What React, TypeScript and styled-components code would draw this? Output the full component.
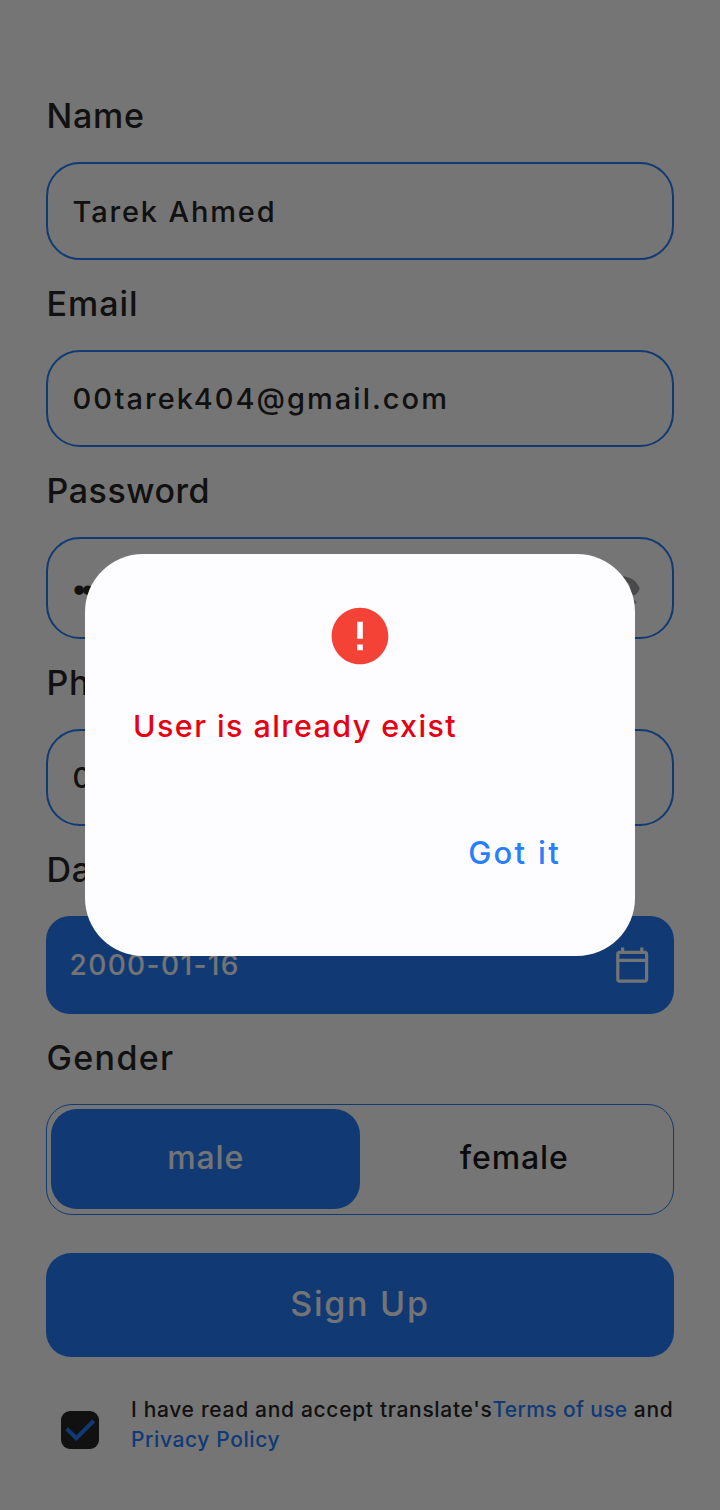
import React from 'react';
import styled, { createGlobalStyle } from 'styled-components';
import { MdError, MdOutlineCalendarToday, MdVisibilityOff } from 'react-icons/md';

const blue = '#267fff';
const ink = '#262626';
const paper = '#fdfdff';

const GlobalStyle = createGlobalStyle`
  * { box-sizing: border-box; }
  body {
    margin: 0;
    background: #fefefe;
    font-family: Inter, "Liberation Sans", sans-serif;
    font-weight: 500;
    color: ${ink};
  }
`;

const Screen = styled.main`
  min-height: 1510px;
  padding: 72px 46px 0;
  display: flex;
  flex-direction: column;
`;

const Label = styled.label<{ $spacing?: number }>`
  height: 90px;
  padding-left: 0.5px;
  font-size: 34px;
  line-height: 88px;
  letter-spacing: ${(p) => p.$spacing ?? 0.8}px;
`;

const Field = styled.div<{ $height: number; $spacing?: number }>`
  height: ${(p) => p.$height}px;
  padding: 0 30.4px 0 24.5px;
  display: flex;
  align-items: center;
  justify-content: space-between;
  border: 2px solid ${blue};
  border-radius: 34px;
  font-size: 29px;
  letter-spacing: ${(p) => p.$spacing ?? 1.85}px;
`;

const Bullets = styled.span`
  padding: 4px 0 0 0.5px;
  font-family: "Liberation Sans", sans-serif;
  font-size: 35px;
  letter-spacing: -3.4px;
`;

const EyeIcon = styled(MdVisibilityOff)`
  width: 38.4px;
  height: 38.4px;
  color: #9f9f9f;
`;

const DateButton = styled.div`
  height: 98px;
  padding: 0 22.5px 0 23.5px;
  display: flex;
  align-items: center;
  justify-content: space-between;
  border-radius: 24px;
  background: ${blue};
  color: ${paper};
  font-size: 28px;
  letter-spacing: 1.4px;
`;

const GenderSwitch = styled.div`
  height: 111px;
  padding: 4px 5px 5px 4px;
  display: flex;
  border: 1px solid ${blue};
  border-radius: 26px;
`;

const GenderOption = styled.div<{ $selected?: boolean }>`
  flex: 1;
  padding: 0 0 4px 1px;
  display: flex;
  align-items: center;
  justify-content: center;
  border-radius: 26px;
  background: ${(p) => (p.$selected ? blue : 'transparent')};
  color: ${(p) => (p.$selected ? paper : '#191a1f')};
  font-size: 32px;
  letter-spacing: 0.9px;
`;

const SignUpButton = styled.div`
  height: 104px;
  margin-top: 38px;
  padding-bottom: 3px;
  display: flex;
  align-items: center;
  justify-content: center;
  border-radius: 25px;
  background: ${blue};
  color: ${paper};
  font-size: 34px;
  letter-spacing: 1.75px;
`;

const Consent = styled.div`
  margin-top: 38px;
  padding-left: 15px;
  display: flex;
  align-items: flex-start;
  gap: 32px;
`;

const CheckBox = styled.span`
  width: 38px;
  height: 38px;
  margin-top: 16px;
  flex: none;
  border-radius: 9px;
  background: ${ink};
`;

const ConsentText = styled.p`
  margin: 0;
  font-size: 21px;
  line-height: 30px;
  letter-spacing: 0.68px;
  white-space: nowrap;
`;

const Link = styled.span<{ $spacing: number }>`
  color: ${blue};
  letter-spacing: ${(p) => p.$spacing}px;
`;

const Scrim = styled.div`
  position: fixed;
  inset: 0;
  display: flex;
  align-items: center;
  justify-content: center;
  background: rgba(0, 0, 0, 0.54);
`;

const Dialog = styled.section`
  width: 550px;
  height: 402px;
  padding: 48px;
  display: flex;
  flex-direction: column;
  border-radius: 58px;
  background: ${paper};
`;

const ErrorIcon = styled(MdError)`
  width: 68px;
  height: 68px;
  align-self: center;
  color: #f44336;
`;

const Message = styled.p`
  margin: 35px 0 0;
  color: #e60012;
  font-size: 30.5px;
  line-height: 42px;
  letter-spacing: 1.42px;
`;

const Confirm = styled.div`
  margin: 85px 26px 0 0;
  align-self: flex-end;
  color: ${blue};
  font-size: 31px;
  line-height: 42px;
  letter-spacing: 2.3px;
`;

export default function App() {
  return (
    <>
      <GlobalStyle />
      <Screen>
        <Label>Name</Label>
        <Field $height={98}>Tarek Ahmed</Field>
        <Label $spacing={1}>Email</Label>
        <Field $height={97} $spacing={2.03}>00tarek404@gmail.com</Field>
        <Label $spacing={0.55}>Password</Label>
        <Field $height={102}>
          <Bullets>••••••••</Bullets>
          <EyeIcon />
        </Field>
        <Label>Phone</Label>
        <Field $height={97}>01000000000</Field>
        <Label>Date of birth</Label>
        <DateButton>
          2000-01-16
          <MdOutlineCalendarToday size={38.4} />
        </DateButton>
        <Label $spacing={1.35}>Gender</Label>
        <GenderSwitch>
          <GenderOption $selected>male</GenderOption>
          <GenderOption>female</GenderOption>
        </GenderSwitch>
        <SignUpButton>Sign Up</SignUpButton>
        <Consent>
          <CheckBox>
            <svg width="38" height="38" viewBox="0 0 38 38" fill="none" stroke={blue} strokeWidth="4">
              <path d="M5.7 17.8 15.3 27.2 32.7 9.8" />
            </svg>
          </CheckBox>
          <ConsentText>
            I have read and accept translate's<Link $spacing={0.35}>Terms of use</Link> and
            <br />
            <Link $spacing={0.6}>Privacy Policy</Link>
          </ConsentText>
        </Consent>
      </Screen>
      <Scrim>
        <Dialog>
          <ErrorIcon />
          <Message>User is already exist</Message>
          <Confirm>Got it</Confirm>
        </Dialog>
      </Scrim>
    </>
  );
}
